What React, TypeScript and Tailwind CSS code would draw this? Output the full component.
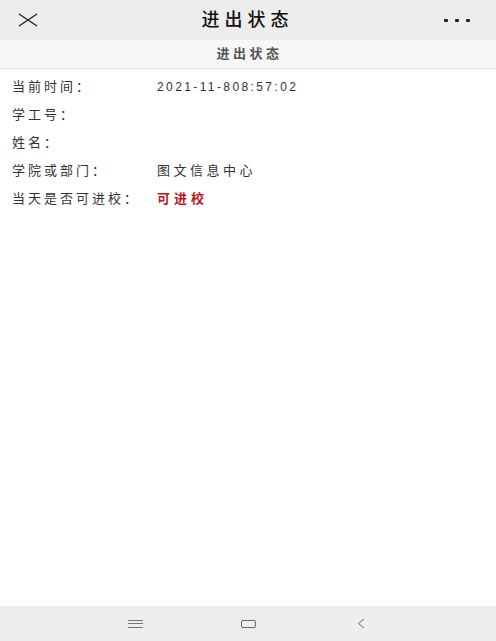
import React from "react";

const ROWS: { label: string; value: string; red?: boolean; cjk?: boolean }[] = [
  { label: "当前时间：", value: "2021-11-808:57:02" },
  { label: "学工号：", value: "" },
  { label: "姓名：", value: "" },
  { label: "学院或部门：", value: "图文信息中心", cjk: true },
  { label: "当天是否可进校：", value: "可进校", red: true },
];

const FONT = { fontFamily: '"Liberation Sans", "Noto Sans CJK SC", sans-serif' };

export default function App() {
  return (
    <div className="w-[496px] h-[641px] flex flex-col bg-white overflow-hidden" style={FONT}>
      {/* Top bar */}
      <div className="h-[40px] bg-[#ededed] flex items-center justify-between px-[18px] shrink-0">
        <svg width="20" height="14" viewBox="0 0 20 14" className="text-[#222]">
          <path d="M1 1 L19 13 M19 1 L1 13" stroke="currentColor" strokeWidth="1.4" fill="none" />
        </svg>
        <div className="text-[18px] text-[#111] font-medium tracking-[5px] pl-[5px] translate-x-[4px]">进出状态</div>
        <div className="flex gap-[7px] items-center w-[26px] mr-[8px]">
          <span className="w-[4px] h-[3px] bg-[#222] rounded-[1px]" />
          <span className="w-[4px] h-[3px] bg-[#222] rounded-[1px]" />
          <span className="w-[4px] h-[3px] bg-[#222] rounded-[1px]" />
        </div>
      </div>

      {/* Sub header */}
      <div className="h-[29px] bg-[#f7f7f7] border-b border-[#e2e2e2] flex items-center justify-center shrink-0">
        <span className="text-[13px] text-[#555] font-bold tracking-[3.5px] pl-[3px]">进出状态</span>
      </div>

      {/* Content */}
      <div className="flex-1 pt-[4px] px-[12px]">
        {ROWS.map(r => (
          <div key={r.label} className="h-[28px] flex items-center text-[13px]">
            <div className="w-[145px] shrink-0 text-[#333] tracking-[3px]">{r.label}</div>
            <div
              className={
                r.red
                  ? "text-[#c0161c] font-bold tracking-[4px]"
                  : r.cjk
                  ? "text-[#333] tracking-[3.5px]"
                  : "text-[#333] text-[12px] tracking-[2.4px]"
              }
            >
              {r.value}
            </div>
          </div>
        ))}
      </div>

      {/* Android nav bar */}
      <div className="h-[35px] bg-[#eeeeee] flex items-center shrink-0">
        <div className="flex items-center w-full h-full">
          <div className="ml-[128px] w-[15px] flex flex-col gap-[2.5px]">
            <span className="h-[1px] bg-[#777]" />
            <span className="h-[1px] bg-[#777]" />
            <span className="h-[1px] bg-[#777]" />
          </div>
          <div className="ml-[98px] w-[15px] h-[8px] border border-[#666] rounded-[2px]" />
          <svg width="8" height="11" viewBox="0 0 8 11" className="ml-[101px] text-[#666]">
            <path d="M7 1 L1.5 5.5 L7 10" stroke="currentColor" strokeWidth="1" fill="none" />
          </svg>
        </div>
      </div>
    </div>
  );
}
